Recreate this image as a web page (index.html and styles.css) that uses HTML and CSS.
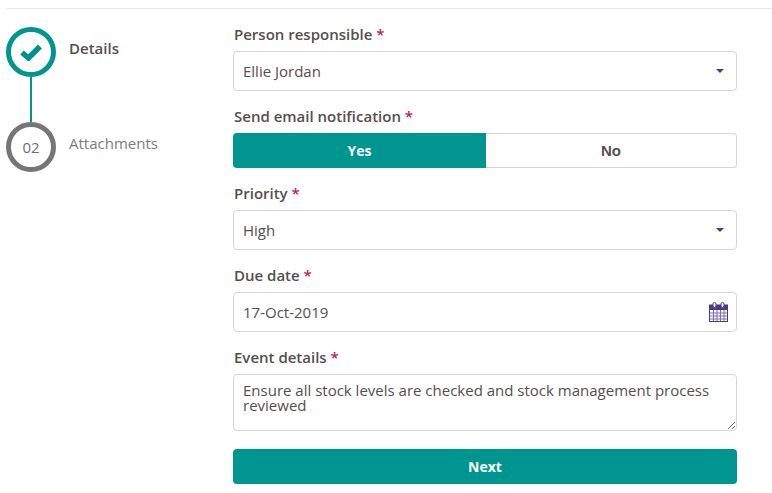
FILE: index.html
```html
<!DOCTYPE html>
<html lang="en">
<head>
    <meta charset="UTF-8">
    <title>Event details</title>
    <link rel="stylesheet" href="styles.css">
</head>
<body>
    <div class="wizard">
        <div class="steps">
            <div class="step step-done">
                <div class="step-circle">
                    <svg width="22" height="18" viewBox="0 0 22 18"><path d="M2 9.5 L8.5 15 L20 3.5" fill="none" stroke="#00918f" stroke-width="5.5"/></svg>
                </div>
                <span class="step-label">Details</span>
            </div>
            <div class="step-line"></div>
            <div class="step">
                <div class="step-circle">02</div>
                <span class="step-label">Attachments</span>
            </div>
        </div>

        <form class="form">
            <label class="field-label">Person responsible <span class="req">*</span></label>
            <div class="control">
                <span>Ellie Jordan</span>
                <span class="caret"></span>
            </div>

            <label class="field-label">Send email notification <span class="req">*</span></label>
            <div class="toggle">
                <div class="toggle-opt toggle-on">Yes</div>
                <div class="toggle-opt">No</div>
            </div>

            <label class="field-label">Priority <span class="req">*</span></label>
            <div class="control">
                <span>High</span>
                <span class="caret"></span>
            </div>

            <label class="field-label">Due date <span class="req">*</span></label>
            <div class="control">
                <span>17-Oct-2019</span>
                <svg class="cal" width="19" height="20" viewBox="0 0 19 20">
                    <rect x="0.5" y="3" width="18" height="16.5" fill="#fff" stroke="#4b3a8c"/>
                    <rect x="0.5" y="3" width="18" height="5" fill="#4b3a8c"/>
                    <rect x="4" y="0.5" width="3" height="5" rx="1.5" fill="#fff" stroke="#4b3a8c"/>
                    <rect x="12" y="0.5" width="3" height="5" rx="1.5" fill="#fff" stroke="#4b3a8c"/>
                    <path d="M1 11h17M1 14h17M1 17h17M4.5 8v11M8 8v11M11.5 8v11M15 8v11" stroke="#7a6cb0" stroke-width="1" fill="none"/>
                </svg>
            </div>

            <label class="field-label">Event details <span class="req">*</span></label>
            <textarea class="area">Ensure all stock levels are checked and stock management process reviewed</textarea>

            <button type="button" class="next">Next</button>
        </form>
    </div>
</body>
</html>
```

FILE: styles.css
```css
body {
    margin: 0;
    padding: 8px 0 0 6px;
    font-family: 'Open Sans', sans-serif;
    color: #554f4c;
    background: #fff;
}

.wizard {
    display: flex;
    border-top: 1px solid #e8e8e8;
    padding-top: 18px;
}

.steps {
    width: 227px;
    flex-shrink: 0;
}

.step {
    display: flex;
    align-items: flex-start;
}

.step-circle {
    width: 50px;
    height: 50px;
    box-sizing: border-box;
    border: 5px solid #767676;
    border-radius: 50%;
    display: flex;
    align-items: center;
    justify-content: center;
    font-size: 15px;
    font-weight: 400;
    color: #6e6e6e;
}

.step-done .step-circle {
    border-color: #00968f;
}

.step-label {
    margin: 11px 0 0 13px;
    font-size: 15px;
    line-height: 20px;
    color: #7c7c7c;
}

.step-done .step-label {
    font-weight: 600;
    color: #554f4c;
}

.step-line {
    width: 2px;
    height: 45px;
    margin-left: 24px;
    background: #00968f;
}

.form {
    width: 504px;
    display: flex;
    flex-direction: column;
}

.field-label {
    font-size: 15px;
    font-weight: 600;
    line-height: 20px;
    margin: 0 0 7px 1px;
    height: 17px;
    position: relative;
    top: -3px;
}

.req {
    color: #c2185b;
}

.control {
    height: 40px;
    box-sizing: border-box;
    border: 1px solid #d6d6d6;
    border-radius: 4px;
    padding: 0 8px 0 9px;
    margin-bottom: 18px;
    display: flex;
    align-items: center;
    justify-content: space-between;
    font-size: 15px;
}

.caret {
    width: 0;
    height: 0;
    margin-right: 4px;
    border-left: 4px solid transparent;
    border-right: 4px solid transparent;
    border-top: 4px solid #4b3a8c;
}

.toggle {
    height: 35px;
    margin-bottom: 18px;
    display: flex;
}

.toggle-opt {
    flex: 1;
    box-sizing: border-box;
    border: 1px solid #d6d6d6;
    border-left: 0;
    border-radius: 0 4px 4px 0;
    display: flex;
    align-items: center;
    justify-content: center;
    font-family: 'Liberation Sans', sans-serif;
    font-size: 15px;
    font-weight: 700;
}

.toggle-on {
    flex: 0 0 253px;
    background: #00968f;
    border: 0;
    border-radius: 4px 0 0 4px;
    color: #fff;
    font-family: 'Open Sans', sans-serif;
    font-size: 14px;
}

.area {
    height: 57px;
    box-sizing: border-box;
    border: 1px solid #d6d6d6;
    border-radius: 4px;
    padding: 8px 8px 8px 9px;
    margin: 0 0 18px;
    font-family: 'Open Sans', sans-serif;
    font-size: 15px;
    line-height: 15px;
    color: #554f4c;
}

.next {
    height: 35px;
    border: 0;
    border-radius: 4px;
    background: #00968f;
    color: #fff;
    font-family: 'Open Sans', sans-serif;
    font-size: 14px;
    font-weight: 700;
}
```
